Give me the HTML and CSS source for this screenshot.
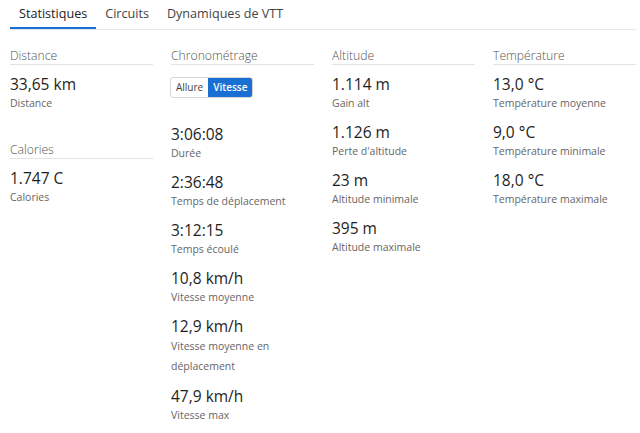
FILE: index.html
```html
<!DOCTYPE html>
<html lang="fr">
<head>
<meta charset="utf-8">
<link rel="stylesheet" href="styles.css">
</head>
<body>
<div class="page">
  <nav class="tabs">
    <a class="tab active">Statistiques</a>
    <a class="tab">Circuits</a>
    <a class="tab">Dynamiques de VTT</a>
  </nav>
  <div class="grid">
    <div class="col">
      <section class="group">
        <h3 class="head">Distance</h3>
        <div class="stat"><div class="val">33,65 km</div><div class="lbl">Distance</div></div>
      </section>
      <section class="group gap">
        <h3 class="head">Calories</h3>
        <div class="stat"><div class="val">1.747 C</div><div class="lbl">Calories</div></div>
      </section>
    </div>
    <div class="col">
      <section class="group">
        <h3 class="head">Chronométrage</h3>
        <div class="toggle"><span class="opt">Allure</span><span class="opt on">Vitesse</span></div>
        <div class="stat"><div class="val">3:06:08</div><div class="lbl">Durée</div></div>
        <div class="stat"><div class="val">2:36:48</div><div class="lbl">Temps de déplacement</div></div>
        <div class="stat"><div class="val">3:12:15</div><div class="lbl">Temps écoulé</div></div>
        <div class="stat"><div class="val">10,8 km/h</div><div class="lbl">Vitesse moyenne</div></div>
        <div class="stat"><div class="val">12,9 km/h</div><div class="lbl wrap">Vitesse moyenne en déplacement</div></div>
        <div class="stat"><div class="val">47,9 km/h</div><div class="lbl">Vitesse max</div></div>
      </section>
    </div>
    <div class="col">
      <section class="group">
        <h3 class="head">Altitude</h3>
        <div class="stat"><div class="val">1.114 m</div><div class="lbl">Gain alt</div></div>
        <div class="stat"><div class="val">1.126 m</div><div class="lbl">Perte d'altitude</div></div>
        <div class="stat"><div class="val">23 m</div><div class="lbl">Altitude minimale</div></div>
        <div class="stat"><div class="val">395 m</div><div class="lbl">Altitude maximale</div></div>
      </section>
    </div>
    <div class="col">
      <section class="group">
        <h3 class="head">Température</h3>
        <div class="stat"><div class="val">13,0 °C</div><div class="lbl">Température moyenne</div></div>
        <div class="stat"><div class="val">9,0 °C</div><div class="lbl">Température minimale</div></div>
        <div class="stat"><div class="val">18,0 °C</div><div class="lbl">Température maximale</div></div>
      </section>
    </div>
  </div>
</div>
</body>
</html>
```

FILE: styles.css
```css
* { box-sizing: border-box; }
html, body { margin: 0; padding: 0; background: #fff; }
body {
  font-family: "Open Sans", "Liberation Sans", sans-serif;
  color: #222;
}
.page { padding: 0 4px 0 10px; }
.tabs {
  display: flex;
  border-bottom: 1px solid #e6e6e6;
  height: 30px;
}
.tab {
  display: block;
  font-size: 12.6px;
  line-height: 27px;
  padding: 0 9px;
  color: #444;
  border-bottom: 2px solid transparent;
}
.tab.active { border-bottom-color: #1a6fd3; color: #222; }
.grid {
  display: grid;
  grid-template-columns: repeat(4, 143px);
  column-gap: 18px;
  padding-top: 18px;
}
.group.gap { margin-top: 30px; }
.head {
  margin: 0 0 9px;
  font-size: 12.2px;
  font-weight: 300;
  color: #555;
  line-height: 16px;
  border-bottom: 1px solid #e3e3e3;
}
.stat { margin-bottom: 10px; }
.val { font-size: 15.5px; line-height: 20px; color: #1e1e1e; }
.lbl { font-size: 10.5px; line-height: 18px; color: #666; }
.lbl.wrap { width: 120px; line-height: 20px; }
.toggle {
  display: inline-flex;
  border: 1px solid #d6d6d6;
  border-radius: 3px;
  margin: 0 0 26px -1px;
  overflow: hidden;
}
.opt {
  font-size: 10px;
  line-height: 19px;
  padding: 0 5px;
  color: #444;
}
.opt.on { background: #1a6fd3; color: #fff; font-weight: 600; }
```
